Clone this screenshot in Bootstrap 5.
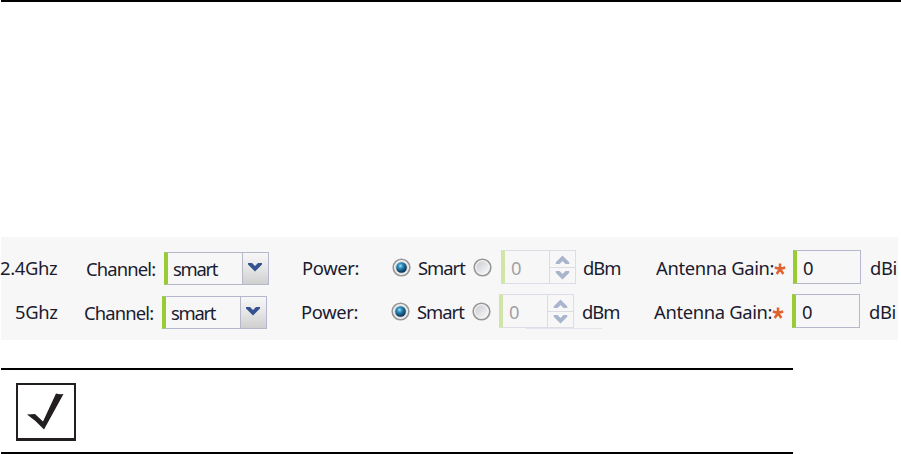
<!DOCTYPE html>
<html lang="en">
<head>
<meta charset="utf-8">
<title>Radio settings</title>
<link href="https://cdn.jsdelivr.net/npm/bootstrap@5.3.0/dist/css/bootstrap.min.css" rel="stylesheet">
<style>
body{background:#fff;width:901px;height:454px;overflow:hidden}
.top-rule{height:2px;margin-left:1px;background:#000}
.settings{margin:235px 3px 0 1px;height:103px;background:#f7f7f7;padding-top:13px;font:18.4px/35px "Noto Sans","Open Sans",sans-serif;letter-spacing:-.35px;color:#1b1b30}
.radio-row{display:grid;grid-template-columns:85px 78px 138px 90px 26px 55px 28px 82px 73px 118px 19px 77px 30px;height:34px;white-space:nowrap}
.radio-row + .radio-row{margin-top:10px;grid-template-columns:83px 78px 139px 90px 26px 55px 27px 83px 72px 118px 20px 77px 30px}
.radio-row > *{min-width:0}
.t{display:block;margin-left:-1px}
.t-short{margin-left:-2px}
.down{padding-top:1px;letter-spacing:-.85px}
.tight{letter-spacing:-1px}
.fld{height:34px;border:1px solid #b5b8cc;border-left:4px solid #9c3;line-height:34px;padding-left:6px}
.sel{width:105px;height:33px;margin-top:2px;letter-spacing:-1.3px;line-height:32px;padding-left:5px}
.num{width:68px}
.spin{width:75px;opacity:.4}
.drop{width:26px;border-left:1px solid #b5b8c8;background:linear-gradient(#f7f7f7,#e6e6e6 50%,#cfcfcf)}
.drop svg{margin:0 1px 2px 0}
.steps{width:26px;border-left:1px solid #b5b8c8}
.steps i{height:16px;width:100%;display:flex;align-items:center;justify-content:center}
.steps i + i{border-top:1px solid #b5b8c8}
.steps svg{margin-right:1px}
.dot{width:19px;height:19px;margin-top:8px;display:block}
.star{margin-top:13px;display:block}
.ghost{width:76px;height:1px;background:#e4e5ec;margin:0 0 0 525px}
.note{width:792px;height:86px;margin:28px 0 0 1px;border-top:2px solid #000;border-bottom:2px solid #000;padding:13px 0 0 15px}
.tick{width:60px;height:58px;border:2px solid #231f20;border-bottom-width:3px}
.tick svg{display:block}
</style>
<script src="https://cdn.jsdelivr.net/npm/bootstrap@5.3.0/dist/js/bootstrap.bundle.min.js"></script>
</head>
<body>
<svg width="0" height="0" class="position-absolute">
<defs>
<radialGradient id="blue" cx=".4" cy=".35" r=".65"><stop offset="0" stop-color="#a5e0f5"/><stop offset=".35" stop-color="#2b8fc0"/><stop offset="1" stop-color="#0b2b4c"/></radialGradient>
<linearGradient id="grey" x1="0" y1="0" x2="1" y2="1"><stop offset="0" stop-color="#c9cbd0"/><stop offset="1" stop-color="#fafafa"/></linearGradient>
<symbol id="on" viewBox="0 0 19 19"><circle cx="9.5" cy="9.5" r="8.3" fill="#f4f4f4" stroke="#969696" stroke-width="1.6"/><circle cx="9.5" cy="9.5" r="6.3" fill="#cfd5da"/><circle cx="9.5" cy="9.5" r="5.3" fill="url(#blue)"/></symbol>
<symbol id="off" viewBox="0 0 19 19"><circle cx="9.5" cy="9.5" r="8.3" fill="#f4f4f4" stroke="#969696" stroke-width="1.6"/><circle cx="9.5" cy="9.5" r="6.2" fill="url(#grey)"/></symbol>
<symbol id="chev" viewBox="0 0 14 9"><path d="M0 0H4L7 3L10 0H14V1.500L7 8.500L0 1.500Z" fill="#35538f"/></symbol>
<symbol id="ast" viewBox="0 0 12 12"><path d="M6 6V.5M6 6L.8 4.500M6 6L11.200 4.500M6 6L2.700 11M6 6L9.300 11" stroke="#e0622f" stroke-width="2.500"/></symbol>
</defs>
</svg>
<div class="top-rule"></div>
<main class="settings">
  <div class="radio-row">
    <span><span class="t">2.4Ghz</span></span>
    <span class="down">Channel:</span>
    <div class="fld sel d-flex"><span class="flex-fill">smart</span><span class="drop d-flex justify-content-center align-items-center"><svg width="14" height="9"><use href="#chev"/></svg></span></div>
    <span>Power:</span>
    <svg class="dot"><use href="#on"/></svg>
    <span class="tight">Smart</span>
    <svg class="dot"><use href="#off"/></svg>
    <div class="fld spin d-flex"><span class="flex-fill">0</span><span class="steps"><i><svg width="15" height="9" viewBox="0 0 14 9" transform="rotate(180)"><use href="#chev" width="14" height="9"/></svg></i><i><svg width="15" height="9" viewBox="0 0 14 9"><use href="#chev" width="14" height="9"/></svg></i></span></div>
    <span class="tight">dBm</span>
    <span>Antenna Gain:</span>
    <svg class="star" width="12" height="12"><use href="#ast"/></svg>
    <div class="fld num">0</div>
    <span>dBi</span>
  </div>
  <div class="radio-row">
    <span class="ps-3"><span class="t t-short">5Ghz</span></span>
    <span class="down">Channel:</span>
    <div class="fld sel d-flex"><span class="flex-fill">smart</span><span class="drop d-flex justify-content-center align-items-center"><svg width="14" height="9"><use href="#chev"/></svg></span></div>
    <span>Power:</span>
    <svg class="dot"><use href="#on"/></svg>
    <span class="tight">Smart</span>
    <svg class="dot"><use href="#off"/></svg>
    <div class="fld spin d-flex"><span class="flex-fill">0</span><span class="steps"><i><svg width="15" height="9" viewBox="0 0 14 9" transform="rotate(180)"><use href="#chev" width="14" height="9"/></svg></i><i><svg width="15" height="9" viewBox="0 0 14 9"><use href="#chev" width="14" height="9"/></svg></i></span></div>
    <span class="tight">dBm</span>
    <span>Antenna Gain:</span>
    <svg class="star" width="12" height="12"><use href="#ast"/></svg>
    <div class="fld num">0</div>
    <span>dBi</span>
  </div>
  <div class="ghost"></div>
</main>
<section class="note">
  <div class="tick"><svg width="56" height="53" viewBox="0 0 56 53"><path d="M9 29.500L17 29L25 36.500L38 8.500Q41 9.500 45.500 9L26 44.500Q18 35.500 9 29.500Z" fill="#231f20"/></svg></div>
</section>
</body>
</html>
